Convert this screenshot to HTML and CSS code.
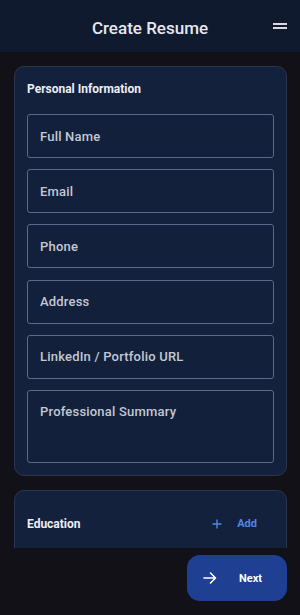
FILE: index.html
```html
<!DOCTYPE html>
<html lang="en">
<head>
    <meta charset="UTF-8">
    <meta name="viewport" content="width=device-width, initial-scale=1.0">
    <title>Create Resume</title>
    <link rel="stylesheet" href="styles.css">
</head>
<body>
    <div class="app">
        <!-- Top Bar -->
        <header class="topbar">
            <h1 class="title">Create Resume</h1>
            <button class="menu" aria-label="Menu">
                <span></span>
                <span></span>
            </button>
        </header>

        <!-- Form Section -->
        <main class="content">
            <section class="card">
                <h2 class="card-title">Personal Information</h2>
                <input class="field" type="text" placeholder="Full Name">
                <input class="field" type="email" placeholder="Email">
                <input class="field" type="tel" placeholder="Phone">
                <input class="field" type="text" placeholder="Address">
                <input class="field" type="url" placeholder="LinkedIn / Portfolio URL">
                <textarea class="field summary" placeholder="Professional Summary"></textarea>
            </section>

            <section class="card">
                <div class="card-row">
                    <h2 class="card-title">Education</h2>
                    <button class="add">
                        <svg width="10" height="10" viewBox="0 0 10 10">
                            <path d="M5 0.5V9.5M0.5 5H9.5" stroke="currentColor" stroke-width="1.4" fill="none"/>
                        </svg>
                        <span>Add</span>
                    </button>
                </div>
            </section>
        </main>

        <!-- Footer -->
        <footer class="footer">
            <button class="next">
                <svg width="14" height="14" viewBox="0 0 14 14">
                    <path d="M1 7H12.5M7.5 2L12.5 7L7.5 12" stroke="currentColor" stroke-width="1.6" fill="none" stroke-linecap="round" stroke-linejoin="round"/>
                </svg>
                <span>Next</span>
            </button>
        </footer>
    </div>
</body>
</html>
```

FILE: styles.css
```css
/* Body Styling */
body {
    margin: 0;
    font-family: Roboto, "Liberation Sans", sans-serif;
    background: #131118;
    color: #e8eaf0;
}

.app {
    height: 615px;
    display: flex;
    flex-direction: column;
    overflow: hidden;
}

/* Top Bar */
.topbar {
    height: 52px;
    flex-shrink: 0;
    background: #0f1a2e;
    display: flex;
    align-items: center;
    justify-content: center;
    position: relative;
}

.title {
    margin: 3px 0 0 0;
    font-size: 17px;
    font-weight: 500;
    color: #e6e8ef;
}

.menu {
    position: absolute;
    right: 13px;
    top: 23px;
    width: 14px;
    padding: 0;
    border: none;
    background: none;
    display: flex;
    flex-direction: column;
    gap: 2px;
}

.menu span {
    display: block;
    height: 2px;
    background: #d8dae2;
}

/* Content */
.content {
    flex: 1;
    overflow: hidden;
    padding: 14px 13px 0 14px;
    display: flex;
    flex-direction: column;
    gap: 14px;
}

.card {
    background: #14213d;
    border: 1px solid #2b3550;
    border-radius: 10px;
    padding: 14px 12px 12px 12px;
    display: flex;
    flex-direction: column;
    flex-shrink: 0;
}

.card-title {
    margin: 0 0 17px 0;
    font-size: 12px;
    font-weight: 700;
    line-height: 16px;
    color: #eceef3;
}

.field {
    box-sizing: border-box;
    height: 44px;
    margin: 0 0 11.2px 0;
    padding: 0 12px;
    border: 1px solid #5a6a8c;
    border-radius: 3px;
    background: #13203b;
    font-family: inherit;
    font-size: 13px;
    font-weight: 500;
    color: #e0e3ea;
    outline: none;
}

.field::placeholder {
    color: #c3c8d3;
    letter-spacing: 0.2px;
}

.summary {
    height: 73px;
    margin-bottom: 0;
    padding-top: 13px;
    resize: none;
}

/* Education Row */
.card-row {
    height: 38px;
    padding-bottom: 30px;
    display: flex;
    align-items: center;
    justify-content: space-between;
}

.card-row .card-title {
    margin: 0;
}

.add {
    display: flex;
    align-items: center;
    gap: 15px;
    margin-right: 17px;
    padding: 0;
    border: none;
    background: none;
    color: #4f86e6;
    font-family: inherit;
    font-size: 11px;
    font-weight: 700;
}

/* Footer */
.footer {
    height: 67px;
    flex-shrink: 0;
    display: flex;
    justify-content: flex-end;
    padding: 7px 13px 0 0;
    box-sizing: border-box;
}

.next {
    width: 100px;
    height: 46px;
    border: none;
    border-radius: 13px;
    background: #1f3f93;
    color: #ffffff;
    display: flex;
    align-items: center;
    gap: 22px;
    padding: 0 0 0 16px;
    font-family: inherit;
    font-size: 11px;
    font-weight: 700;
}
```
